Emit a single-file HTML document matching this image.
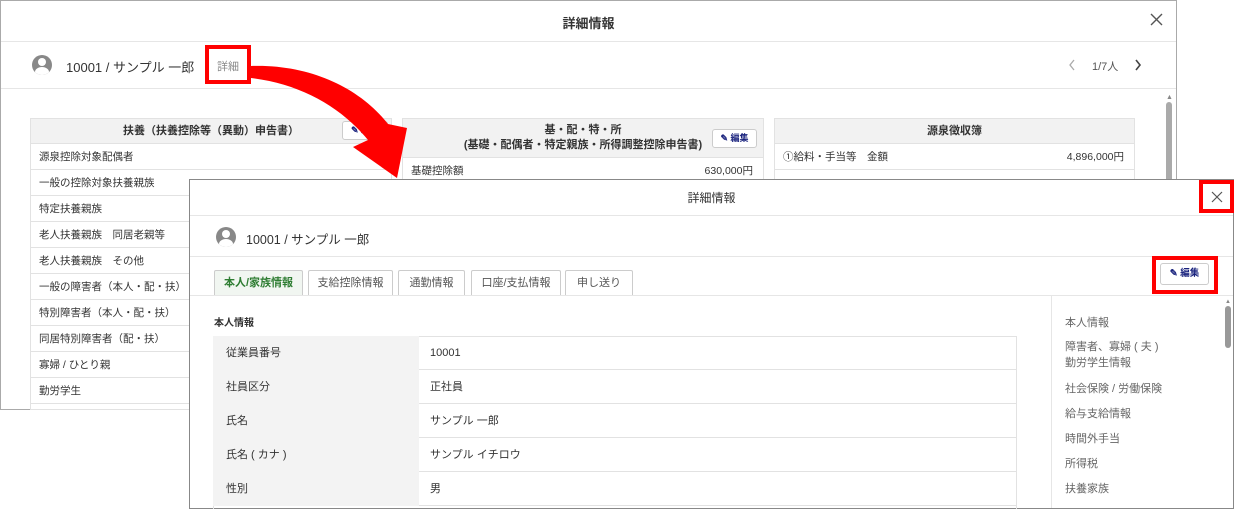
<!DOCTYPE html>
<html><head><meta charset="utf-8"><style>
*{box-sizing:border-box;margin:0;padding:0}
body{width:1235px;height:509px;position:relative;background:#fff;font-family:"Liberation Sans","Noto Sans CJK JP",sans-serif;color:#333;overflow:hidden;font-size:11px}
.abs{position:absolute}
.dlg{position:absolute;background:#fff;border:1px solid #999}
.line{position:absolute;height:1px;background:#e6e6e6}
.tbl{position:absolute;border:1px solid #e2e2e2}
.th{background:#f2f2f2;text-align:center;font-weight:bold;font-size:11px;border-bottom:1px solid #e2e2e2}
.row{height:26px;line-height:26px;border-bottom:1px solid #e2e2e2;padding-left:8px;font-size:10.5px}
.btn{position:absolute;border:1px solid #ccc;border-radius:3px;background:#fff;color:#1a237e;font-weight:bold;font-size:9px;text-align:center}
.red{position:absolute;border:4px solid #f00}
.tab{position:absolute;top:270px;height:26px;border:1px solid #ccc;border-bottom:none;background:#fff;font-size:11px;color:#555;text-align:center;line-height:25px;border-radius:2px 2px 0 0}
.fr{position:absolute;left:213px;width:804px;height:34px;border-bottom:1px solid #e2e2e2;font-size:11px;line-height:35px}
.fr .l{position:absolute;left:0;top:0;width:206px;height:34px;background:#f3f3f3;padding-left:13px}
.fr .v{position:absolute;left:217px}
.side{position:absolute;left:1065px;font-size:11px;color:#666}
.avatar{position:absolute;width:20px;height:20px;border-radius:50%;background:#888;overflow:hidden}
.avatar:before{content:"";position:absolute;left:6px;top:3px;width:8px;height:8px;border-radius:50%;background:#fff}
.avatar:after{content:"";position:absolute;left:3px;top:12px;width:14px;height:10px;border-radius:50% 50% 0 0;background:#fff}
</style></head><body>

<div class="dlg" style="left:0;top:0;width:1177px;height:410px;border-color:#aaa"></div>
<div class="abs" style="left:0;top:13px;width:1177px;text-align:center;font-size:13px;font-weight:bold;color:#333">詳細情報</div>
<svg class="abs" style="left:1150px;top:13px" width="13" height="13"><path d="M1 1L12 12M12 1L1 12" stroke="#555" stroke-width="1.4"/></svg>
<div class="line" style="left:1px;top:41px;width:1175px"></div>
<div class="avatar" style="left:32px;top:55px"></div>
<div class="abs" style="left:66px;top:57px;font-size:13px">10001 / サンプル 一郎</div>
<div class="abs" style="left:217px;top:58px;font-size:11px;color:#888">詳細</div>
<svg class="abs" style="left:1068px;top:59px" width="8" height="12"><path d="M6 1L2 6L6 11" stroke="#aaa" stroke-width="1.3" fill="none"/></svg>
<div class="abs" style="left:1092px;top:58px;font-size:11px;color:#555">1/7人</div>
<svg class="abs" style="left:1134px;top:59px" width="8" height="12"><path d="M2 1L6 6L2 11" stroke="#444" stroke-width="1.6" fill="none"/></svg>
<div class="line" style="left:1px;top:88px;width:1175px"></div>
<div class="abs" style="left:1166px;top:94px;width:6px;height:316px;">
 <div style="font-size:7px;color:#888;line-height:8px">▲</div>
 <div style="width:6px;height:300px;background:#aaa;border-radius:3px"></div>
</div>

<div class="tbl" style="left:30px;top:118px;width:362px;height:292px">
 <div class="th" style="height:25px;line-height:25px">扶養（扶養控除等（異動）申告書）</div>
 <div class="row">源泉控除対象配偶者</div>
 <div class="row">一般の控除対象扶養親族</div>
 <div class="row">特定扶養親族</div>
 <div class="row">老人扶養親族　同居老親等</div>
 <div class="row">老人扶養親族　その他</div>
 <div class="row">一般の障害者（本人・配・扶）</div>
 <div class="row">特別障害者（本人・配・扶）</div>
 <div class="row">同居特別障害者（配・扶）</div>
 <div class="row">寡婦 / ひとり親</div>
 <div class="row">勤労学生</div>
</div>
<div class="btn" style="left:342px;top:121px;width:46px;height:19px;line-height:17px">✎ 編集</div>

<div class="tbl" style="left:402px;top:118px;width:362px;height:70px">
 <div class="th" style="height:39px;padding-top:4px;line-height:15px">基・配・特・所<br>(基礎・配偶者・特定親族・所得調整控除申告書)</div>
 <div class="row" style="position:relative">基礎控除額<span style="position:absolute;right:10px">630,000円</span></div>
</div>
<div class="btn" style="left:712px;top:129px;width:45px;height:19px;line-height:17px">✎ 編集</div>

<div class="tbl" style="left:774px;top:118px;width:361px;height:70px">
 <div class="th" style="height:25px;line-height:25px">源泉徴収簿</div>
 <div class="row" style="position:relative">①給料・手当等　金額<span style="position:absolute;right:10px">4,896,000円</span></div>
</div>

<!-- front dialog -->
<div class="dlg" style="left:189px;top:179px;width:1045px;height:330px;border-color:#888"></div>
<div class="abs" style="left:189px;top:189px;width:1045px;text-align:center;font-size:12px;color:#333">詳細情報</div>
<svg class="abs" style="left:1211px;top:191px" width="12" height="12"><path d="M1 1L11 11M11 1L1 11" stroke="#555" stroke-width="1.2"/></svg>
<div class="line" style="left:190px;top:215px;width:1043px"></div>
<div class="avatar" style="left:216px;top:227px"></div>
<div class="abs" style="left:246px;top:229px;font-size:12.5px">10001 / サンプル 一郎</div>
<div class="line" style="left:190px;top:256px;width:1043px"></div>
<div class="tab" style="left:214px;width:89px;background:#f1f6f1;color:#2e7d32;font-weight:bold">本人/家族情報</div>
<div class="tab" style="left:308px;width:85px">支給控除情報</div>
<div class="tab" style="left:398px;width:67px">通勤情報</div>
<div class="tab" style="left:471px;width:90px">口座/支払情報</div>
<div class="tab" style="left:565px;width:68px">申し送り</div>
<div class="btn" style="left:1160px;top:263px;width:49px;height:22px;line-height:20px;font-size:9.5px">✎ 編集</div>
<div class="line" style="left:190px;top:295px;width:1043px"></div>
<div class="abs" style="left:1051px;top:296px;width:1px;height:212px;background:#e6e6e6"></div>
<div class="abs" style="left:214px;top:314px;font-size:10px;font-weight:bold">本人情報</div>
<div class="abs" style="left:213px;top:336px;width:804px;height:173px;border:1px solid #e2e2e2;border-bottom:none"></div>
<div class="fr" style="top:336px"><div class="l">従業員番号</div><div class="v">10001</div></div>
<div class="fr" style="top:370px"><div class="l">社員区分</div><div class="v">正社員</div></div>
<div class="fr" style="top:404px"><div class="l">氏名</div><div class="v">サンプル 一郎</div></div>
<div class="fr" style="top:438px"><div class="l">氏名 ( カナ )</div><div class="v">サンプル イチロウ</div></div>
<div class="fr" style="top:472px"><div class="l">性別</div><div class="v">男</div></div>
<div class="side" style="top:314px">本人情報</div>
<div class="side" style="top:339px;line-height:16px">障害者、寡婦 ( 夫 )<br>勤労学生情報</div>
<div class="side" style="top:380px">社会保険 / 労働保険</div>
<div class="side" style="top:405px">給与支給情報</div>
<div class="side" style="top:430px">時間外手当</div>
<div class="side" style="top:455px">所得税</div>
<div class="side" style="top:480px">扶養家族</div>
<div class="abs" style="left:1225px;top:299px;width:6px">
 <div style="font-size:6px;color:#888;line-height:7px">▲</div>
 <div style="width:6px;height:42px;background:#999;border-radius:3px"></div>
</div>

<!-- red boxes -->
<div class="red" style="left:205px;top:45px;width:46px;height:39px"></div>
<div class="red" style="left:1199px;top:180px;width:35px;height:33px"></div>
<div class="red" style="left:1152px;top:256px;width:66px;height:38px"></div>

<svg class="abs" style="left:0;top:0" width="1235" height="509">
 <path d="M251 66 C310 64 360 88 388 124 L407 128 L397 178 L353 147 L368 140 C340 106 300 84 251 78 Z" fill="#f00"/>
</svg>
</body></html>
